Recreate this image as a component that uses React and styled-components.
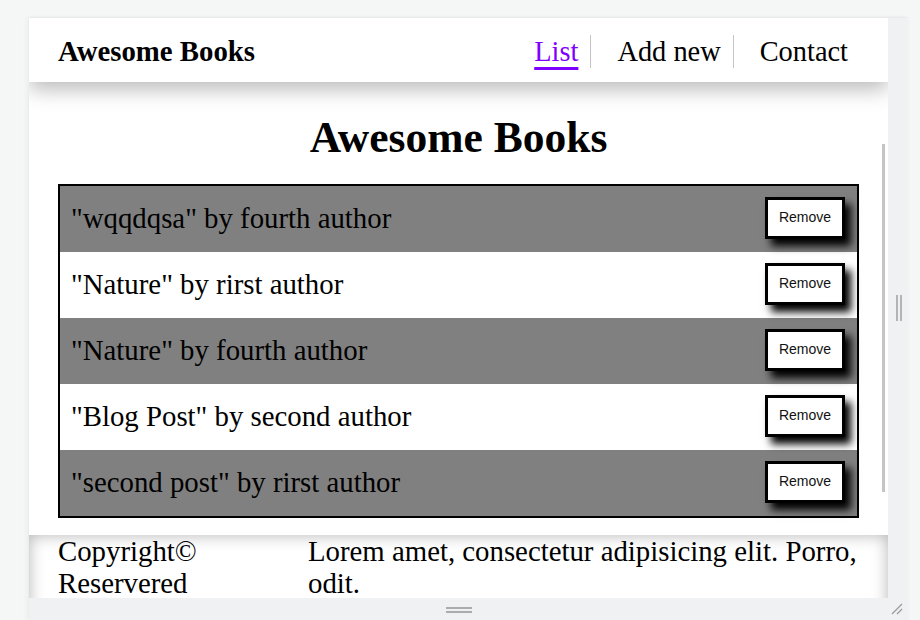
import React from "react";
import styled, { createGlobalStyle } from "styled-components";

const Global = createGlobalStyle`
  html, body { margin: 0; padding: 0; }
  body {
    background: #f5f6f6;
    font-family: "Liberation Serif", "Times New Roman", serif;
    color: #000;
  }
  * { box-sizing: border-box; }
`;

const Page = styled.div`
  width: 920px;
  height: 620px;
  display: grid;
  grid-template-columns: 29px 879px 1fr;
  grid-template-rows: 18px 1fr;
  overflow: hidden;
`;

const Viewer = styled.div`
  grid-column: 2;
  grid-row: 2;
  display: grid;
  grid-template-columns: 859px 20px;
  grid-template-rows: 580px 22px;
  background: #f0f1f3;
  box-shadow: -3px 0 5px rgba(0, 0, 0, 0.03), 0 -1px 2px rgba(0, 0, 0, 0.06);
`;

const Frame = styled.div`
  position: relative;
  overflow: hidden;
  background: #fff;
  display: flex;
  flex-direction: column;
`;

const Header = styled.header`
  position: relative;
  z-index: 1;
  flex: none;
  height: 64px;
  display: flex;
  align-items: center;
  justify-content: space-between;
  padding: 2px 28px 0 29px;
  background: #fff;
  box-shadow: 0 7px 20px rgba(0, 0, 0, 0.28);
`;

const Brand = styled.div`
  font-size: 28.8px;
  font-weight: 700;
`;

const Nav = styled.nav`
  display: flex;
  align-items: center;
`;

const NavItem = styled.a`
  font-size: 28.4px;
  line-height: 33px;
  padding: 0 12px 0 26px;
  color: ${(p) => (p.$active ? "#7f00ff" : "#000")};
  text-decoration: ${(p) => (p.$active ? "underline" : "none")};
  text-decoration-thickness: 3px;
  text-underline-offset: 6px;
  border-right: ${(p) => (p.$last ? "none" : "1px solid #c4c4c4")};
  cursor: pointer;
`;

const Main = styled.main`
  flex: none;
  padding: 0 29px 0 29px;
`;

const Title = styled.h1`
  margin: 30px 0 22px;
  text-align: center;
  font-size: 43.5px;
  line-height: 50px;
  font-weight: 700;
`;

const BookList = styled.ul`
  list-style: none;
  margin: 0;
  padding: 0;
  border: 2px solid #000;
`;

const BookRow = styled.li`
  height: 66px;
  display: flex;
  align-items: center;
  justify-content: space-between;
  padding: 0 12px 2px 11px;
  background: ${(p) => (p.$grey ? "#808080" : "#fff")};
  font-size: 28.8px;
`;

const RemoveButton = styled.button`
  width: 80px;
  height: 42px;
  background: #fff;
  border: 3px solid #000;
  box-shadow: 6px 7px 8px #000;
  font-family: "Liberation Sans", Arial, sans-serif;
  font-size: 14px;
  color: #111;
  padding: 0 0 2px;
  cursor: pointer;
`;

const Footer = styled.footer`
  flex: none;
  margin-top: 17px;
  height: 90px;
  display: grid;
  grid-template-columns: 250px 1fr;
  padding: 0 28px 0 29px;
  box-shadow: inset 0 0 16px rgba(0, 0, 0, 0.3);
  font-size: 28.8px;
  line-height: 32px;
`;

const FooterText = styled.p`
  margin: 0;
`;

const ScrollThumb = styled.div`
  position: absolute;
  left: 853px;
  top: 126px;
  width: 3px;
  height: 348px;
  background: #c4c4c4;
`;

const Rail = styled.div`
  display: flex;
  align-items: center;
  justify-content: center;
  gap: 2px;
  padding-left: 2px;
`;

const GripLine = styled.span`
  width: 2px;
  height: 26px;
  background: #b4b4b4;
`;

const BottomBar = styled.div`
  display: flex;
  flex-direction: column;
  align-items: center;
  justify-content: center;
  gap: 2px;
  padding-top: 1px;
`;

const HandleLine = styled.span`
  width: 26px;
  height: 2px;
  background: #acacac;
`;

const Corner = styled.div`
  display: flex;
  align-items: center;
  justify-content: center;
  padding: 0 3px 0 0;
`;

const books = [
  { title: "wqqdqsa", author: "fourth author" },
  { title: "Nature", author: "rirst author" },
  { title: "Nature", author: "fourth author" },
  { title: "Blog Post", author: "second author" },
  { title: "second post", author: "rirst author" },
];

export default function App() {
  return (
    <>
      <Global />
      <Page>
        <Viewer>
          <Frame>
            <Header>
              <Brand>Awesome Books</Brand>
              <Nav>
                <NavItem $active>List</NavItem>
                <NavItem>Add new</NavItem>
                <NavItem $last>Contact</NavItem>
              </Nav>
            </Header>
            <Main>
              <Title>Awesome Books</Title>
              <BookList>
                {books.map((b, i) => (
                  <BookRow key={i} $grey={i % 2 === 0}>
                    <span>
                      "{b.title}" by {b.author}
                    </span>
                    <RemoveButton>Remove</RemoveButton>
                  </BookRow>
                ))}
              </BookList>
            </Main>
            <Footer>
              <FooterText>Copyright© Reservered</FooterText>
              <FooterText>
                Lorem amet, consectetur adipisicing elit. Porro, odit.
              </FooterText>
            </Footer>
            <ScrollThumb />
          </Frame>
          <Rail>
            <GripLine />
            <GripLine />
          </Rail>
          <BottomBar>
            <HandleLine />
            <HandleLine />
          </BottomBar>
          <Corner>
            <svg width="12" height="12" viewBox="0 0 12 12">
              <line x1="1" y1="11" x2="11" y2="1" stroke="#9a9a9a" strokeWidth="1.3" />
              <line x1="6" y1="11" x2="11" y2="6" stroke="#9a9a9a" strokeWidth="1.3" />
            </svg>
          </Corner>
        </Viewer>
      </Page>
    </>
  );
}
